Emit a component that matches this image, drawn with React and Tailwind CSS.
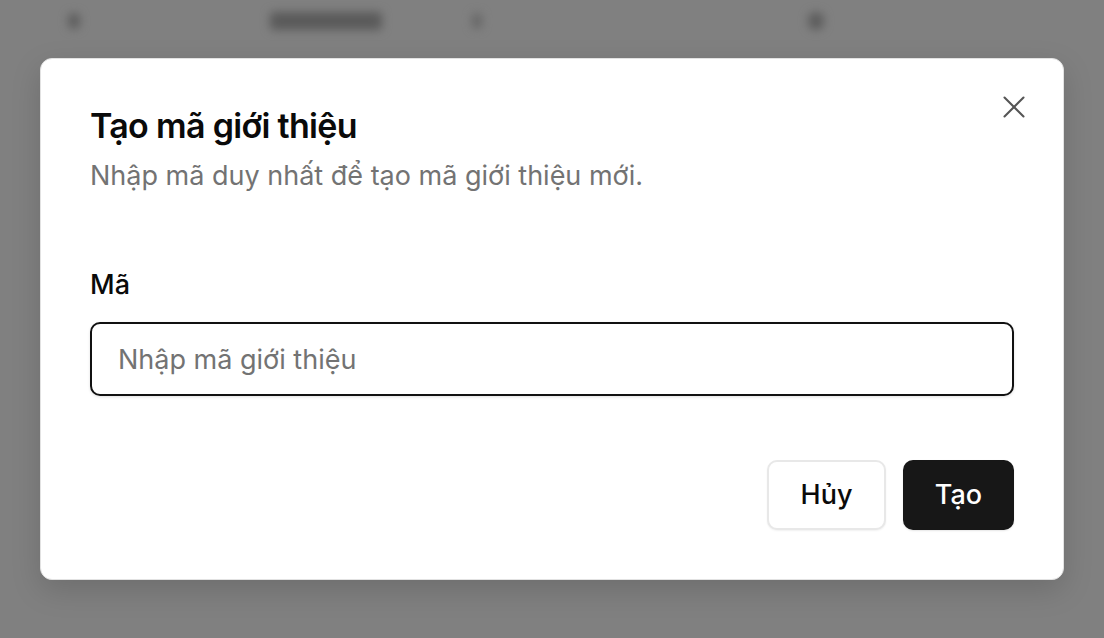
import { X } from 'lucide-react';

const font = { fontFamily: 'Inter, "Noto Sans", sans-serif' };

// blurred page content behind the overlay
const BackgroundPage = () => (
  <div className="h-full w-full">
    <div className="flex h-[42px] items-center">
      <span className="ml-[68px] h-[16px] w-[12px] rounded-full bg-[#5c5c5c] blur-[5px]" />
      <span className="ml-[190px] h-[18px] w-[112px] rounded bg-[#5a5a5a] blur-[5px]" />
      <span className="ml-[90px] h-[16px] w-[10px] rounded-full bg-[#666] blur-[5px]" />
      <span className="ml-[326px] h-[18px] w-[16px] rounded-full bg-[#5c5c5c] blur-[5px]" />
    </div>
  </div>
);

export default function App() {
  return (
    <div className="relative h-[638px] w-full overflow-hidden bg-[#808080]" style={font}>
      <BackgroundPage />

      <div className="absolute inset-0 flex items-center justify-center">
        <div className="relative flex w-[1024px] flex-col rounded-[12px] border border-[#e2e2e2] bg-white px-[49px] pb-[49px] pt-[47px] shadow-[0_10px_30px_rgba(0,0,0,0.15)]">
          <button className="absolute right-[30px] top-[29px] text-[#555]">
            <X size={38} strokeWidth={1.3} />
          </button>

          <h2 className="text-[34px] font-semibold leading-[40px] tracking-[-0.02em] text-[#0a0a0a]">
            Tạo mã giới thiệu
          </h2>
          <p className="mt-[14px] text-[27px] leading-[32px] text-[#737373]">
            Nhập mã duy nhất để tạo mã giới thiệu mới.
          </p>

          <label className="mt-[77px] text-[27px] font-medium leading-[32px] text-[#0a0a0a]">
            Mã
          </label>
          <input
            className="mt-[21px] h-[74px] w-full rounded-[10px] border-2 border-[#111] px-[26px] text-[27px] text-[#0a0a0a] shadow-[0_1px_3px_rgba(0,0,0,0.12)] outline-none placeholder:text-[#737373]"
            placeholder="Nhập mã giới thiệu"
          />

          <div className="mt-[64px] flex justify-end gap-[17px]">
            <button className="h-[70px] w-[119px] rounded-[10px] border-2 border-[#e8e8e8] bg-white text-[27px] font-medium text-[#0a0a0a] shadow-[0_1px_2px_rgba(0,0,0,0.06)]">
              Hủy
            </button>
            <button className="h-[70px] w-[111px] rounded-[10px] bg-[#171717] text-[27px] font-medium text-white shadow-[0_1px_2px_rgba(0,0,0,0.1)]">
              Tạo
            </button>
          </div>
        </div>
      </div>
    </div>
  );
}
